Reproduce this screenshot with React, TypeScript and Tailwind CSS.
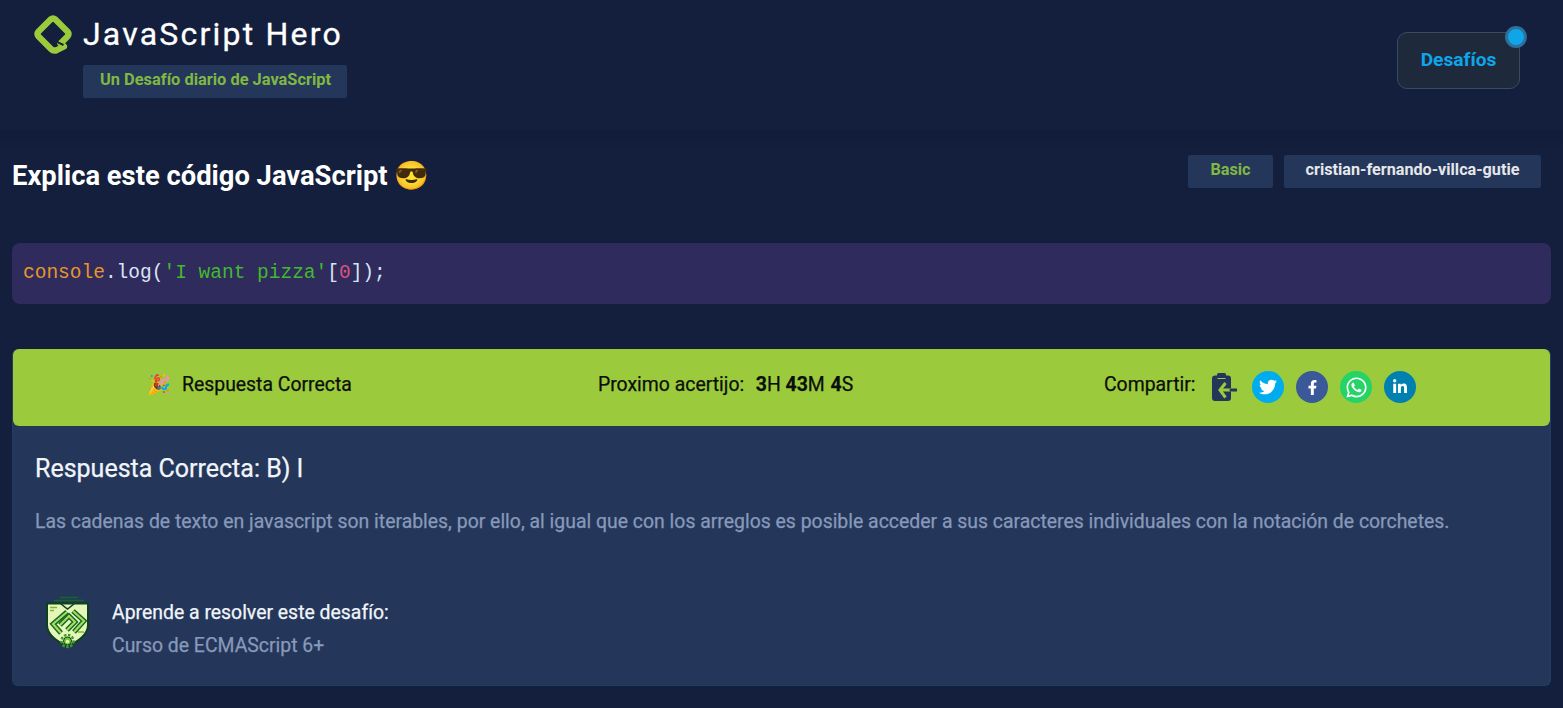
import { FaFacebookF, FaLinkedinIn, FaTwitter, FaWhatsapp } from "react-icons/fa";

const share = [
  { name: "twitter", bg: "bg-[#00aced]", icon: <FaTwitter className="h-[18px] w-[18px]" /> },
  { name: "facebook", bg: "bg-[#3b5998]", icon: <FaFacebookF className="h-[15px] w-[15px]" /> },
  { name: "whatsapp", bg: "bg-[#25d366]", icon: <FaWhatsapp className="h-[23px] w-[23px]" /> },
  { name: "linkedin", bg: "bg-[#007fb1]", icon: <FaLinkedinIn className="h-[16px] w-[16px]" /> },
];

function Logo() {
  return (
    <svg viewBox="0 0 40 40" className="h-10 w-10 shrink-0">
      <path
        d="M31 32.500 L24 36 Q20.500 37.500 18 35 L5.500 22.500 Q3.500 20 5.500 17.500 L17.500 5.500 Q20 3.500 22.500 5.500 L34.500 17.500 Q36.500 20 34.500 22.500 L27.500 29.500"
        fill="none"
        stroke="#9bcb3c"
        strokeWidth="6.300"
        strokeLinecap="round"
      />
      <path d="M22 26 L26 29 L30.500 31" fill="none" stroke="#131f3d" strokeWidth="2" />
    </svg>
  );
}

function ClipboardIcon() {
  return (
    <svg viewBox="7 5 25 28" className="h-7 w-[25px] shrink-0">
      <rect x="7" y="7.500" width="19" height="25.500" rx="3" fill="#24375a" />
      <rect x="12" y="5" width="9" height="4.500" rx="1.500" fill="#24375a" />
      <path d="M12.500 10.500h8" stroke="#9bcb3c" strokeWidth="1" />
      <path d="M20.500 15 L15 22 L20.500 29.500" fill="none" stroke="#9bcb3c" strokeWidth="3" />
      <path d="M15.500 22 H26" stroke="#9bcb3c" strokeWidth="3" />
      <path d="M26 22 H32" stroke="#24375a" strokeWidth="3" strokeLinecap="round" />
    </svg>
  );
}

function CourseBadge() {
  return (
    <svg viewBox="0 0 56 60" className="-mt-2 h-[60px] w-14 shrink-0">
      <path d="M20 6.500h18M14 9.500h30" stroke="#14652a" strokeWidth="1.500" />
      <path
        d="M7 12.500H48V34C48 44 38 50 27.500 56C17 50 7 44 7 34Z"
        fill="#e4f7b8"
        stroke="#0d3f20"
        strokeWidth="2"
      />
      <path d="M21 13 L27.500 18 L34 13" fill="none" stroke="#0d3f20" strokeWidth="1.500" />
      <path d="M10 16.500h7M10 19.500h4M38 41h6" stroke="#7cb82f" strokeWidth="1.500" />
      <g fill="none" strokeLinejoin="miter">
        <g stroke="#14652a" strokeWidth="5">
          <path d="M27 21 L13 33 L21 42" />
          <path d="M20 34 L29 25 L35 31 L27 39" />
          <path d="M33 20 L44 30 L34 41" />
        </g>
        <g stroke="#a5dd5a" strokeWidth="2.200">
          <path d="M27 21 L13 33 L21 42" />
          <path d="M20 34 L29 25 L35 31 L27 39" />
          <path d="M33 20 L44 30 L34 41" />
        </g>
      </g>
      <circle cx="27.500" cy="50" r="6" fill="none" stroke="#3f9a2e" strokeWidth="2.500" strokeDasharray="2.500 1.500" />
      <circle cx="27.500" cy="50" r="4" fill="#7cc23a" stroke="#0d3f20" strokeWidth="1" />
      <circle cx="27.500" cy="50.500" r="1.800" fill="#e4f7b8" />
    </svg>
  );
}

export default function App() {
  return (
    <div className="min-h-[708px] bg-[#131f3d] font-['Roboto',sans-serif] text-white">
      <header className="flex h-[130px] items-start justify-between pl-[33px] pr-[43px]">
        <div className="pt-[13px]">
          <div className="flex items-center gap-[10px]">
            <Logo />
            <h1 className="text-[32px] leading-[42px] tracking-[2.200px] [-webkit-text-stroke:0.3px]">JavaScript Hero</h1>
          </div>
          <div className="ml-[50px] mt-[10px] flex h-[33px] w-[264px] items-center rounded-[2px] bg-[#24365a] pb-[3px] pl-[17px] text-[16.400px] font-bold text-[#80b843]">
            Un Desafío diario de JavaScript
          </div>
        </div>
        <div className="relative mt-[32px] flex h-[57px] w-[123px] items-center justify-center rounded-[10px] border border-[#3b4a63] bg-[#1e293b] text-[19.200px] font-bold text-[#0ea5e9]">
          Desafíos
          <span className="absolute -right-[8px] -top-[7px] h-[22px] w-[22px] rounded-full border-[3px] border-[#2e6f9c] bg-[#0ea5e9]" />
        </div>
      </header>

      <main className="bg-gradient-to-b from-[#111c38] to-[#131f3d] to-[24px] px-[12px]">
        <div className="flex items-start justify-between pr-[10px] pt-[25px]">
          <h2 className="flex items-center gap-[6px] text-[27.350px] font-bold leading-[42px]">
            Explica este código JavaScript
            <span className="text-[28px] leading-none">😎</span>
          </h2>
          <div className="flex gap-[11px] text-[16.200px] font-bold">
            <span className="flex h-[33px] w-[85px] items-center justify-center rounded-[2px] bg-[#24365a] pb-[2px] text-[#80b843]">
              Basic
            </span>
            <span className="flex h-[33px] w-[257px] items-center justify-center rounded-[2px] bg-[#24365a] pb-[2px] text-[#e5e7eb]">
              cristian-fernando-villca-gutie
            </span>
          </div>
        </div>

        <pre className="mt-[46px] flex h-[61px] items-center rounded-[8px] bg-[#2f2b5c] px-[11px] font-['Liberation_Mono',monospace] text-[19.500px] text-[#dbe4f5]">
          <span className="text-[#e8952c]">console</span>.log(
          <span className="text-[#42b82f]">'I want pizza'</span>[
          <span className="text-[#d9537f]">0</span>]);
        </pre>

        <section className="mt-[45px] h-[337px] rounded-[6px] border-x border-b border-[#1c3f63] bg-[#24375a]">
          <div className="flex h-[77px] items-center rounded-[6px] bg-[#9bcb3c] pl-[134px] text-[19.400px] text-[#0b0f0a] [-webkit-text-stroke:0.25px]">
            <div className="flex w-[204px] items-center gap-[11px] pb-[5px]">
              <span className="text-[19px] leading-none">🎉</span>
              <span className="whitespace-nowrap">Respuesta Correcta</span>
            </div>
            <div className="ml-[247px] w-[255px] whitespace-nowrap pb-[5px]">
              Proximo acertijo:&nbsp;&nbsp;<span className="ml-[2px] font-bold">3</span>H <span className="font-bold">43</span>M <span className="ml-px font-bold">4</span>S
            </div>
            <div className="ml-[251px] flex items-center">
              <span className="w-[92px] whitespace-nowrap pb-[5px]">Compartir:</span>
              <span className="ml-[16px] flex">
                <ClipboardIcon />
              </span>
              <div className="ml-[15px] flex gap-[12px]">
                {share.map((item) => (
                  <span
                    key={item.name}
                    className={`flex h-8 w-8 items-center justify-center rounded-full text-white ${item.bg}`}
                  >
                    {item.icon}
                  </span>
                ))}
              </div>
            </div>
          </div>

          <div className="px-[22px] [-webkit-text-stroke:0.25px]">
            <h3 className="mt-[25px] text-[25px] leading-[36px] text-[#f1f5f9]">Respuesta Correcta: B) I</h3>
            <p className="mt-[21px] text-[19.420px] leading-[28px] text-[#8899ba]">
              Las cadenas de texto en javascript son iterables, por ello, al igual que con los arreglos es posible acceder a sus caracteres individuales con la notación de corchetes.
            </p>
            <div className="mt-[63px] flex items-start gap-[16px] pl-[5px]">
              <CourseBadge />
              <div>
                <p className="text-[19.420px] leading-[28px] text-[#f1f5f9]">Aprende a resolver este desafío:</p>
                <p className="mt-[5px] text-[19.420px] leading-[28px] text-[#8899ba]">Curso de ECMAScript 6+</p>
              </div>
            </div>
          </div>
        </section>
      </main>
    </div>
  );
}
